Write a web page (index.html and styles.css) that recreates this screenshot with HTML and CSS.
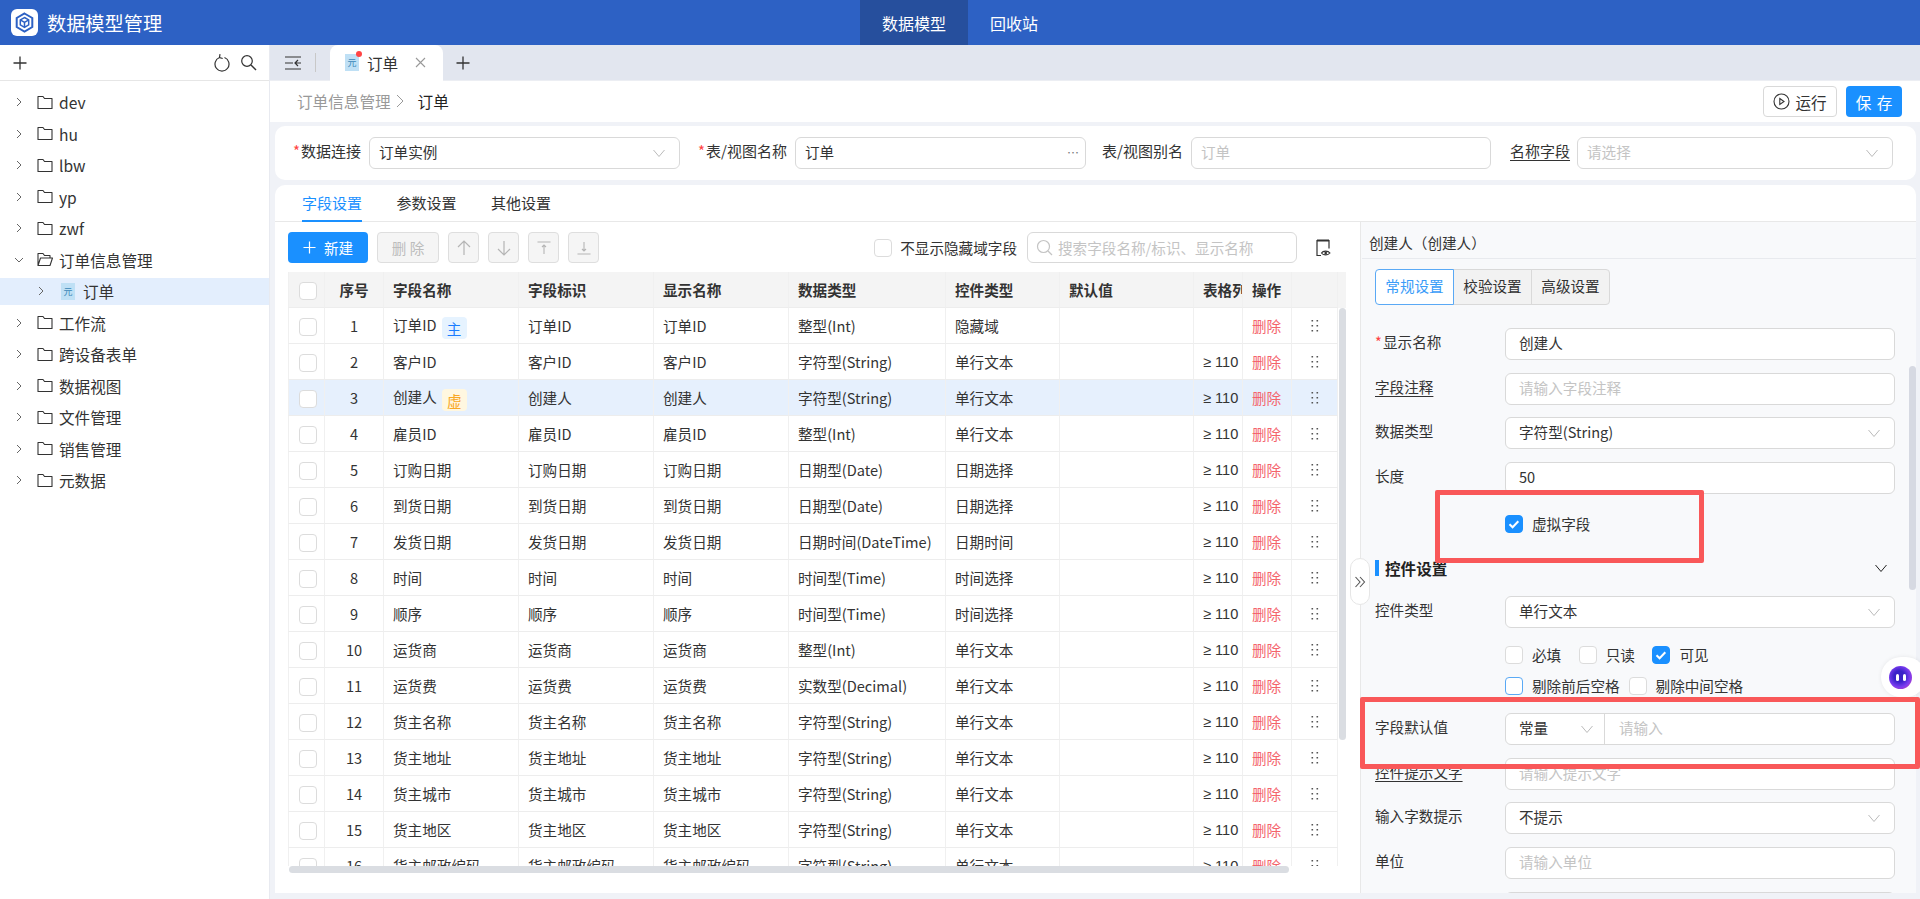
FILE: index.html
```html
<!DOCTYPE html>
<html lang="zh-CN">
<head>
    <meta charset="UTF-8">
    <title>数据模型管理</title>
    <link rel="stylesheet" href="styles.css">
</head>
<body>
    <svg class="sprite" width="0" height="0">
        <symbol id="i-folder" viewBox="0 0 16 15"><path d="M1 13.5V1.5h5l1.5 2H15v10z" fill="none" stroke="currentColor" stroke-width="1.1" stroke-linejoin="round"/></symbol>
        <symbol id="i-folder-open" viewBox="0 0 16 15"><path d="M1 13.5V1.5h5l1.5 2H13v2.5M1 13.5l2.5-7.5H15.500l-2.500 7.500z" fill="none" stroke="currentColor" stroke-width="1.1" stroke-linejoin="round"/></symbol>
        <symbol id="i-right" viewBox="0 0 10 10"><path d="M3 1l4 4-4 4" fill="none" stroke="currentColor" stroke-width="1"/></symbol>
        <symbol id="i-down" viewBox="0 0 16 16"><path d="M2.500 5l5.500 6.500L13.500 5" fill="none" stroke="currentColor" stroke-width="1"/></symbol>
        <symbol id="i-plus" viewBox="0 0 14 14"><path d="M7 0.500v13M0.500 7h13" fill="none" stroke="currentColor" stroke-width="1.300"/></symbol>
        <symbol id="i-dots" viewBox="0 0 10 14"><path d="M1.500 1h1.600v1.600H1.500zM6.500 1h1.600v1.600H6.500zM1.500 6h1.600v1.600H1.500zM6.500 6h1.600v1.600H6.500zM1.500 11h1.600v1.600H1.500zM6.500 11h1.600v1.600H6.500z" fill="#555"/></symbol>
        <symbol id="i-check" viewBox="0 0 18 18"><path d="M4.500 9.200l3.100 3.100 5.700-6" fill="none" stroke="#fff" stroke-width="2"/></symbol>
    </svg>

    <div class="app">
        <header class="topbar">
            <div class="brand">
                <span class="logo">
                    <svg width="27" height="27" viewBox="0 0 27 27"><path d="M13.500 4.500l7.800 4.500v9l-7.800 4.500L5.700 18V9z" fill="none" stroke="#2d61c4" stroke-width="2"/><path d="M13.500 8.500l4.200 2.400v5l-4.200 2.500-4.200-2.500v-5zM9.300 10.900l4.200 2.500 4.200-2.500M13.500 13.400v5" fill="none" stroke="#2d61c4" stroke-width="1.500"/></svg>
                </span>
                <span class="brand-name">数据模型管理</span>
            </div>
            <nav class="topnav">
                <a class="topnav-item active">数据模型</a>
                <a class="topnav-item">回收站</a>
            </nav>
        </header>

        <div class="layout">
            <aside class="sidebar">
                <div class="side-tools">
                    <svg class="side-add" width="14" height="14"><use href="#i-plus"/></svg>
                    <svg class="side-refresh" width="16" height="20" viewBox="0 0 16 20"><path d="M5.500 4.500a7 7 0 1 0 5 0M6 1.200L5.500 4.500l3.200 1" fill="none" stroke="#333" stroke-width="1.200"/></svg>
                    <svg class="side-search" width="17" height="17" viewBox="0 0 17 17"><circle cx="7" cy="7" r="5.300" fill="none" stroke="#333" stroke-width="1.200"/><path d="M11 11l5 5" stroke="#333" stroke-width="1.400"/></svg>
                </div>
                <ul class="tree">
                    <li class="tree-row"><svg class="tree-arrow" width="10" height="10"><use href="#i-right"/></svg><svg class="tree-folder" width="16" height="15"><use href="#i-folder"/></svg>dev</li>
                    <li class="tree-row"><svg class="tree-arrow" width="10" height="10"><use href="#i-right"/></svg><svg class="tree-folder" width="16" height="15"><use href="#i-folder"/></svg>hu</li>
                    <li class="tree-row"><svg class="tree-arrow" width="10" height="10"><use href="#i-right"/></svg><svg class="tree-folder" width="16" height="15"><use href="#i-folder"/></svg>lbw</li>
                    <li class="tree-row"><svg class="tree-arrow" width="10" height="10"><use href="#i-right"/></svg><svg class="tree-folder" width="16" height="15"><use href="#i-folder"/></svg>yp</li>
                    <li class="tree-row"><svg class="tree-arrow" width="10" height="10"><use href="#i-right"/></svg><svg class="tree-folder" width="16" height="15"><use href="#i-folder"/></svg>zwf</li>
                    <li class="tree-row"><svg class="tree-arrow open" width="10" height="10"><use href="#i-right"/></svg><svg class="tree-folder" width="16" height="15"><use href="#i-folder-open"/></svg>订单信息管理</li>
                    <li class="tree-row child"><svg class="tree-arrow" width="10" height="10"><use href="#i-right"/></svg><span class="doc-icon">元</span>订单</li>
                    <li class="tree-row"><svg class="tree-arrow" width="10" height="10"><use href="#i-right"/></svg><svg class="tree-folder" width="16" height="15"><use href="#i-folder"/></svg>工作流</li>
                    <li class="tree-row"><svg class="tree-arrow" width="10" height="10"><use href="#i-right"/></svg><svg class="tree-folder" width="16" height="15"><use href="#i-folder"/></svg>跨设备表单</li>
                    <li class="tree-row"><svg class="tree-arrow" width="10" height="10"><use href="#i-right"/></svg><svg class="tree-folder" width="16" height="15"><use href="#i-folder"/></svg>数据视图</li>
                    <li class="tree-row"><svg class="tree-arrow" width="10" height="10"><use href="#i-right"/></svg><svg class="tree-folder" width="16" height="15"><use href="#i-folder"/></svg>文件管理</li>
                    <li class="tree-row"><svg class="tree-arrow" width="10" height="10"><use href="#i-right"/></svg><svg class="tree-folder" width="16" height="15"><use href="#i-folder"/></svg>销售管理</li>
                    <li class="tree-row"><svg class="tree-arrow" width="10" height="10"><use href="#i-right"/></svg><svg class="tree-folder" width="16" height="15"><use href="#i-folder"/></svg>元数据</li>
                </ul>
            </aside>

            <main class="main">
                <div class="tabbar">
                    <svg class="tab-collapse" width="18" height="14" viewBox="0 0 18 14"><path d="M1 1h16M1 7h8M1 13h16M17 7h-6M14 4l-3 3 3 3" fill="none" stroke="#333" stroke-width="1.200"/></svg>
                    <span class="tab-sep"></span>
                    <div class="page-tab">
                        <span class="doc-icon">元<i class="dot"></i></span>
                        <span>订单</span>
                        <svg class="tab-close" width="11" height="11" viewBox="0 0 11 11"><path d="M1 1l9 9M10 1l-9 9" stroke="#999" stroke-width="1.100"/></svg>
                    </div>
                    <svg class="tab-add" width="14" height="14"><use href="#i-plus"/></svg>
                </div>

                <div class="crumbs">
                    <span class="crumb">订单信息管理</span>
                    <svg class="crumb-sep" width="10" height="14" viewBox="0 0 10 14"><path d="M2 1l6 6-6 6" fill="none" stroke="#999" stroke-width="1"/></svg>
                    <span class="crumb-now">订单</span>
                    <button class="btn-run">
                        <svg width="17" height="17" viewBox="0 0 17 17"><circle cx="8.500" cy="8.500" r="7.500" fill="none" stroke="#333" stroke-width="1.100"/><path d="M6.800 5.500l4.200 3-4.200 3z" fill="none" stroke="#333" stroke-width="1.100"/></svg>
                        运行
                    </button>
                    <button class="btn-save">保 存</button>
                </div>

                <div class="content">
                    <section class="form-card">
                        <label class="head-label lab1"><em>*</em>数据连接</label>
                        <div class="input head-input in1">订单实例<svg class="chev" width="16" height="16"><use href="#i-down"/></svg></div>
                        <label class="head-label lab2"><em>*</em>表/视图名称</label>
                        <div class="input head-input in2">订单<span class="more">⋯</span></div>
                        <label class="head-label lab3">表/视图别名</label>
                        <div class="input head-input in3 holder">订单</div>
                        <label class="head-label lab4 under">名称字段</label>
                        <div class="input head-input in4 holder">请选择<svg class="chev" width="16" height="16"><use href="#i-down"/></svg></div>
                    </section>

                    <section class="work-card">
                        <div class="subtabs">
                            <span class="subtab active">字段设置</span>
                            <span class="subtab">参数设置</span>
                            <span class="subtab">其他设置</span>
                        </div>
                        <div class="work-body">
                            <div class="fields">
                                <div class="toolbar">
                                    <button class="btn-new"><svg width="13" height="13"><use href="#i-plus"/></svg>新建</button>
                                    <button class="btn-off btn-del">删 除</button>
                                    <button class="btn-off btn-icon"><svg width="14" height="16" viewBox="0 0 14 16"><path d="M7 15V1M1 7l6-6 6 6" fill="none" stroke="#b5b5b5" stroke-width="1.200"/></svg></button>
                                    <button class="btn-off btn-icon"><svg width="14" height="16" viewBox="0 0 14 16"><path d="M7 1v14M1 9l6 6 6-6" fill="none" stroke="#b5b5b5" stroke-width="1.200"/></svg></button>
                                    <button class="btn-off btn-icon"><svg width="14" height="14" viewBox="0 0 14 14"><path d="M0.500 1h13M7 13V4M5 6l2-2 2 2" fill="none" stroke="#b5b5b5" stroke-width="1.100"/></svg></button>
                                    <button class="btn-off btn-icon"><svg width="14" height="14" viewBox="0 0 14 14"><path d="M0.500 13h13M7 1v9M5 8l2 2 2-2" fill="none" stroke="#b5b5b5" stroke-width="1.100"/></svg></button>
                                    <span class="hide-opt"><span class="box"></span>不显示隐藏域字段</span>
                                    <div class="search">
                                        <svg width="17" height="17" viewBox="0 0 17 17"><circle cx="7.500" cy="7.500" r="6" fill="none" stroke="#c4c4c4" stroke-width="1.200"/><path d="M12 12l4 4" stroke="#c4c4c4" stroke-width="1.200"/></svg>
                                        搜索字段名称/标识、显示名称
                                    </div>
                                    <svg class="eye-doc" width="20" height="20" viewBox="0 0 20 20"><path d="M8 17.500H4V2.500h12v8" fill="none" stroke="#333" stroke-width="1.200"/><path d="M4 2.500h12" stroke="#333" stroke-width="2"/><path d="M8.500 15c1.500-2.500 6.500-2.500 8.500 0-2 2.500-7 2.500-8.500 0z" fill="none" stroke="#333" stroke-width="1.100"/><circle cx="12.700" cy="15" r="1.300" fill="#333"/></svg>
                                </div>

                                <div class="table-wrap">
                                    <table class="grid">
                                        <colgroup>
                                            <col class="c-check"><col class="c-no"><col class="c-text"><col class="c-text"><col class="c-text"><col class="c-type"><col class="c-ctrl"><col class="c-def"><col class="c-w"><col class="c-w"><col class="c-drag">
                                        </colgroup>
                                        <thead>
                                            <tr><th><span class="box"></span></th><th class="mid">序号</th><th>字段名称</th><th>字段标识</th><th>显示名称</th><th>数据类型</th><th>控件类型</th><th>默认值</th><th class="clip">表格列</th><th>操作</th><th></th></tr>
                                        </thead>
                                        <tbody>
                                            <tr><td><span class="box"></span></td><td class="mid">1</td><td>订单ID<span class="tag tag-main">主</span></td><td>订单ID</td><td>订单ID</td><td>整型(Int)</td><td>隐藏域</td><td></td><td></td><td><a class="del">删除</a></td><td class="mid"><svg width="10" height="14"><use href="#i-dots"/></svg></td></tr>
                                            <tr><td><span class="box"></span></td><td class="mid">2</td><td>客户ID</td><td>客户ID</td><td>客户ID</td><td>字符型(String)</td><td>单行文本</td><td></td><td class="clip">≥ 110</td><td><a class="del">删除</a></td><td class="mid"><svg width="10" height="14"><use href="#i-dots"/></svg></td></tr>
                                            <tr class="current"><td><span class="box"></span></td><td class="mid">3</td><td>创建人<span class="tag tag-virtual">虚</span></td><td>创建人</td><td>创建人</td><td>字符型(String)</td><td>单行文本</td><td></td><td class="clip">≥ 110</td><td><a class="del">删除</a></td><td class="mid"><svg width="10" height="14"><use href="#i-dots"/></svg></td></tr>
                                            <tr><td><span class="box"></span></td><td class="mid">4</td><td>雇员ID</td><td>雇员ID</td><td>雇员ID</td><td>整型(Int)</td><td>单行文本</td><td></td><td class="clip">≥ 110</td><td><a class="del">删除</a></td><td class="mid"><svg width="10" height="14"><use href="#i-dots"/></svg></td></tr>
                                            <tr><td><span class="box"></span></td><td class="mid">5</td><td>订购日期</td><td>订购日期</td><td>订购日期</td><td>日期型(Date)</td><td>日期选择</td><td></td><td class="clip">≥ 110</td><td><a class="del">删除</a></td><td class="mid"><svg width="10" height="14"><use href="#i-dots"/></svg></td></tr>
                                            <tr><td><span class="box"></span></td><td class="mid">6</td><td>到货日期</td><td>到货日期</td><td>到货日期</td><td>日期型(Date)</td><td>日期选择</td><td></td><td class="clip">≥ 110</td><td><a class="del">删除</a></td><td class="mid"><svg width="10" height="14"><use href="#i-dots"/></svg></td></tr>
                                            <tr><td><span class="box"></span></td><td class="mid">7</td><td>发货日期</td><td>发货日期</td><td>发货日期</td><td>日期时间(DateTime)</td><td>日期时间</td><td></td><td class="clip">≥ 110</td><td><a class="del">删除</a></td><td class="mid"><svg width="10" height="14"><use href="#i-dots"/></svg></td></tr>
                                            <tr><td><span class="box"></span></td><td class="mid">8</td><td>时间</td><td>时间</td><td>时间</td><td>时间型(Time)</td><td>时间选择</td><td></td><td class="clip">≥ 110</td><td><a class="del">删除</a></td><td class="mid"><svg width="10" height="14"><use href="#i-dots"/></svg></td></tr>
                                            <tr><td><span class="box"></span></td><td class="mid">9</td><td>顺序</td><td>顺序</td><td>顺序</td><td>时间型(Time)</td><td>时间选择</td><td></td><td class="clip">≥ 110</td><td><a class="del">删除</a></td><td class="mid"><svg width="10" height="14"><use href="#i-dots"/></svg></td></tr>
                                            <tr><td><span class="box"></span></td><td class="mid">10</td><td>运货商</td><td>运货商</td><td>运货商</td><td>整型(Int)</td><td>单行文本</td><td></td><td class="clip">≥ 110</td><td><a class="del">删除</a></td><td class="mid"><svg width="10" height="14"><use href="#i-dots"/></svg></td></tr>
                                            <tr><td><span class="box"></span></td><td class="mid">11</td><td>运货费</td><td>运货费</td><td>运货费</td><td>实数型(Decimal)</td><td>单行文本</td><td></td><td class="clip">≥ 110</td><td><a class="del">删除</a></td><td class="mid"><svg width="10" height="14"><use href="#i-dots"/></svg></td></tr>
                                            <tr><td><span class="box"></span></td><td class="mid">12</td><td>货主名称</td><td>货主名称</td><td>货主名称</td><td>字符型(String)</td><td>单行文本</td><td></td><td class="clip">≥ 110</td><td><a class="del">删除</a></td><td class="mid"><svg width="10" height="14"><use href="#i-dots"/></svg></td></tr>
                                            <tr><td><span class="box"></span></td><td class="mid">13</td><td>货主地址</td><td>货主地址</td><td>货主地址</td><td>字符型(String)</td><td>单行文本</td><td></td><td class="clip">≥ 110</td><td><a class="del">删除</a></td><td class="mid"><svg width="10" height="14"><use href="#i-dots"/></svg></td></tr>
                                            <tr><td><span class="box"></span></td><td class="mid">14</td><td>货主城市</td><td>货主城市</td><td>货主城市</td><td>字符型(String)</td><td>单行文本</td><td></td><td class="clip">≥ 110</td><td><a class="del">删除</a></td><td class="mid"><svg width="10" height="14"><use href="#i-dots"/></svg></td></tr>
                                            <tr><td><span class="box"></span></td><td class="mid">15</td><td>货主地区</td><td>货主地区</td><td>货主地区</td><td>字符型(String)</td><td>单行文本</td><td></td><td class="clip">≥ 110</td><td><a class="del">删除</a></td><td class="mid"><svg width="10" height="14"><use href="#i-dots"/></svg></td></tr>
                                            <tr><td><span class="box"></span></td><td class="mid">16</td><td>货主邮政编码</td><td>货主邮政编码</td><td>货主邮政编码</td><td>字符型(String)</td><td>单行文本</td><td></td><td class="clip">≥ 110</td><td><a class="del">删除</a></td><td class="mid"><svg width="10" height="14"><use href="#i-dots"/></svg></td></tr>
                                        </tbody>
                                    </table>
                                    <span class="head-corner"></span>
                                    <span class="vbar"></span>
                                </div>
                                <div class="hbar"></div>
                            </div>

                            <div class="props">
                                <div class="props-head">创建人（创建人）</div>
                                <div class="props-body">
                                    <div class="seg">
                                        <span class="seg-item active">常规设置</span>
                                        <span class="seg-item">校验设置</span>
                                        <span class="seg-item">高级设置</span>
                                    </div>

                                    <div class="row first-row">
                                        <label class="row-label"><em>*</em>显示名称</label>
                                        <div class="input">创建人</div>
                                    </div>
                                    <div class="row">
                                        <label class="row-label under">字段注释</label>
                                        <div class="input holder">请输入字段注释</div>
                                    </div>
                                    <div class="row">
                                        <label class="row-label">数据类型</label>
                                        <div class="input">字符型(String)<svg class="chev" width="16" height="16"><use href="#i-down"/></svg></div>
                                    </div>
                                    <div class="row">
                                        <label class="row-label">长度</label>
                                        <div class="input">50</div>
                                    </div>

                                    <div class="checks virtual-check">
                                        <span class="opt"><span class="box on"><svg width="18" height="18"><use href="#i-check"/></svg></span>虚拟字段</span>
                                    </div>

                                    <div class="group-title">
                                        <span>控件设置</span>
                                        <svg width="16" height="16"><use href="#i-down"/></svg>
                                    </div>

                                    <div class="row ctrl-row">
                                        <label class="row-label">控件类型</label>
                                        <div class="input">单行文本<svg class="chev" width="16" height="16"><use href="#i-down"/></svg></div>
                                    </div>

                                    <div class="checks check-a">
                                        <span class="opt"><span class="box"></span>必填</span>
                                        <span class="opt"><span class="box"></span>只读</span>
                                        <span class="opt"><span class="box on"><svg width="18" height="18"><use href="#i-check"/></svg></span>可见</span>
                                    </div>
                                    <div class="checks check-b">
                                        <span class="opt"><span class="box focus"></span>剔除前后空格</span>
                                        <span class="opt"><span class="box"></span>剔除中间空格</span>
                                    </div>

                                    <div class="row default-row">
                                        <label class="row-label">字段默认值</label>
                                        <div class="input combo">
                                            <span class="combo-type">常量<svg class="chev" width="16" height="16"><use href="#i-down"/></svg></span>
                                            <span class="combo-value">请输入</span>
                                        </div>
                                    </div>
                                    <div class="row">
                                        <label class="row-label under">控件提示文字</label>
                                        <div class="input holder">请输入提示文字</div>
                                    </div>
                                    <div class="row">
                                        <label class="row-label">输入字数提示</label>
                                        <div class="input">不提示<svg class="chev" width="16" height="16"><use href="#i-down"/></svg></div>
                                    </div>
                                    <div class="row">
                                        <label class="row-label">单位</label>
                                        <div class="input holder">请输入单位</div>
                                    </div>
                                    <div class="row">
                                        <label class="row-label"></label>
                                        <div class="input"></div>
                                    </div>
                                </div>
                                <span class="props-bar"></span>
                            </div>
                        </div>
                    </section>
                </div>
            </main>
        </div>

        <!-- 覆盖层 -->
        <div class="split-toggle"><svg width="12" height="12" viewBox="0 0 12 12"><path d="M1.500 1l4.500 5-4.500 5M6 1l4.500 5L6 11" fill="none" stroke="#555" stroke-width="1.100"/></svg></div>
        <div class="ai-float"><span class="ai-ball"><i></i><i></i></span></div>
        <div class="mark mark-a"></div>
        <div class="mark mark-b"></div>
    </div>
</body>
</html>
```

FILE: styles.css
```css
* {
    box-sizing: border-box;
}
html, body {
    margin: 0;
    height: 100%;
    overflow: hidden;
}
body {
    font-family: "Noto Sans CJK SC", "Noto Sans", sans-serif;
    font-size: 14.6px;
    line-height: 20px;
    color: #333;
    background: #fff;
}
.sprite {
    position: absolute;
}
.app {
    position: relative;
    display: flex;
    flex-direction: column;
    height: 899px;
    overflow: hidden;
}

/* 顶部导航 */
.topbar {
    display: flex;
    height: 45px;
    flex: none;
    background-color: #2d61c4;
    color: #fff;
}
.brand {
    display: flex;
    align-items: center;
    width: 860px;
    padding-left: 11px;
}
.logo {
    display: flex;
    width: 27px;
    height: 27px;
    margin-right: 9px;
    background: #fff;
    border-radius: 6px;
}
.brand-name {
    font-size: 19.2px;
}
.topnav {
    display: flex;
}
.topnav-item {
    display: flex;
    align-items: center;
    padding: 0 22px;
    font-size: 16px;
}
.topnav-item.active {
    background-color: #264f9d;
}

.layout {
    display: flex;
    flex: 1;
    min-height: 0;
}

/* 左侧树 */
.sidebar {
    width: 270px;
    flex: none;
    border-right: 1px solid #e8eaf0;
}
.side-tools {
    display: flex;
    align-items: center;
    height: 36px;
    padding: 0 12px 0 13px;
    border-bottom: 1px solid #e6e6e6;
    color: #333;
}
.side-refresh {
    margin-left: auto;
    margin-right: 10px;
}
.tree {
    list-style: none;
    margin: 0;
    padding: 7.5px 0 0;
    font-size: 15.6px;
}
.tree-row {
    display: flex;
    align-items: center;
    height: 27px;
    margin-bottom: 4.5px;
    padding-left: 14px;
    color: #333;
}
.tree-row.child {
    padding-left: 36px;
    background-color: #e3eefd;
}
.tree-arrow {
    margin-right: 13px;
    color: #666;
}
.tree-arrow.open {
    transform: rotate(90deg);
}
.tree-folder {
    margin-right: 6px;
    color: #333;
}
.doc-icon {
    position: relative;
    display: inline-block;
    width: 14px;
    height: 17px;
    margin-right: 8px;
    background-color: #bfe0f5;
    color: #3a87b8;
    font-size: 9px;
    line-height: 18px;
    text-align: center;
}
.tree-row.child .doc-icon {
    margin-left: 2px;
}

/* 页签 */
.main {
    display: flex;
    flex-direction: column;
    flex: 1;
    min-width: 0;
}
.tabbar {
    display: flex;
    align-items: center;
    height: 36px;
    flex: none;
    padding-left: 14px;
    background-color: #e2e6ef;
    border-bottom: 1px solid #eceef3;
}
.tab-sep {
    width: 1px;
    height: 19px;
    margin: 0 14px 0 13px;
    background-color: #c8c8c8;
}
.page-tab {
    display: flex;
    align-items: center;
    width: 113px;
    height: 36px;
    padding-left: 15px;
    background: #fff;
    border-radius: 8px 8px 0 0;
    font-size: 15.6px;
}
.dot {
    position: absolute;
    top: -3px;
    right: -3px;
    width: 6px;
    height: 6px;
    background-color: #f44;
    border-radius: 50%;
}
.tab-close {
    margin-left: 17px;
}
.tab-add {
    margin-left: 13px;
    color: #333;
}

/* 面包屑 */
.crumbs {
    display: flex;
    align-items: center;
    height: 41px;
    flex: none;
    padding: 0 18px 0 27px;
    font-size: 15.6px;
}
.crumb {
    margin-bottom: 2px;
    color: #999;
}
.crumb-sep {
    margin: 0 13px 2px 4px;
}
.crumb-now {
    margin-bottom: 2px;
    color: #222;
}
.btn-run {
    display: flex;
    align-items: center;
    justify-content: center;
    gap: 5px;
    width: 74px;
    height: 31px;
    margin-left: auto;
    padding: 0;
    background: #fff;
    border: 1px solid #d9d9d9;
    border-radius: 4px;
    color: #333;
    font: inherit;
}
.btn-save {
    width: 56px;
    height: 31px;
    margin-left: 9px;
    padding: 0;
    background-color: #1a90ff;
    border: none;
    border-radius: 4px;
    color: #fff;
    font: inherit;
    word-spacing: 2px;
}

.content {
    display: flex;
    flex-direction: column;
    flex: 1;
    min-height: 0;
    padding: 4px 4px 6px 5px;
    background-color: #f0f2f7;
}

/* 通用输入 */
.input {
    position: relative;
    display: flex;
    align-items: center;
    height: 32px;
    padding: 0 13px 2px;
    background: #fff;
    border: 1px solid #d9d9d9;
    border-radius: 6px;
    color: #333;
}
.input.holder {
    color: #c4c4c4;
}
.chev {
    position: absolute;
    top: 7px;
    right: 12px;
    color: #bbb;
}
em {
    display: inline-block;
    width: 8px;
    color: #f44;
    font-style: normal;
}
.under {
    text-decoration: underline;
    text-underline-offset: 3px;
}

/* 头部表单 */
.form-card {
    display: flex;
    align-items: center;
    height: 54px;
    flex: none;
    padding-left: 18px;
    background: #fff;
    border-radius: 10px;
}
.head-label {
    flex: none;
    padding-bottom: 4px;
    font-size: 15px;
    white-space: nowrap;
}
.head-input {
    flex: none;
    padding: 0 9px 2px;
}
.lab1 { width: 68px; }
.in1 { width: 311px; margin-left: 8px; }
.lab2 { width: 89px; margin-left: 18px; }
.in2 { width: 291px; margin-left: 8px; }
.lab3 { width: 79px; margin-left: 16px; }
.in3 { width: 300px; margin-left: 10px; }
.lab4 { width: 58px; margin-left: 19px; }
.in4 { width: 316px; margin-left: 9px; }
.more {
    position: absolute;
    right: 6px;
    top: 5px;
    color: #777;
    font-size: 12px;
}

/* 主卡片 */
.work-card {
    display: flex;
    flex-direction: column;
    flex: 1;
    min-height: 0;
    margin-top: 5px;
    background: #fff;
    border-radius: 10px 10px 0 0;
}
.subtabs {
    display: flex;
    height: 37px;
    flex: none;
    gap: 34.5px;
    padding-left: 27px;
    border-bottom: 1px solid #e8e8e8;
    font-size: 15px;
}
.subtab {
    height: 37px;
    padding-top: 8px;
    color: #333;
}
.subtab.active {
    color: #1a90ff;
    border-bottom: 2px solid #1a90ff;
}
.work-body {
    display: flex;
    flex: 1;
    min-height: 0;
}
.fields {
    width: 1085px;
    flex: none;
    padding: 10px 0 0 13px;
}
.toolbar {
    display: flex;
    align-items: center;
    width: 1058px;
    height: 31px;
    gap: 9px;
}
.toolbar button {
    height: 31px;
    padding: 0;
    border-radius: 4px;
    font: inherit;
}
.btn-new {
    display: flex;
    align-items: center;
    justify-content: center;
    gap: 8px;
    width: 80px;
    background-color: #1a90ff;
    border: none;
    color: #fff;
}
.btn-off {
    background-color: #f5f5f5;
    border: 1px solid #dedede;
    color: #bcbcbc;
}
.btn-del {
    width: 62px;
}
.btn-icon {
    display: flex;
    align-items: center;
    justify-content: center;
    width: 31px;
}
.box {
    display: inline-block;
    width: 18px;
    height: 18px;
    flex: none;
    background: #fff;
    border: 1px solid #dcdcdc;
    border-radius: 4px;
    vertical-align: middle;
}
.box svg {
    display: block;
    margin: -1px;
}
.box.on {
    background-color: #1a90ff;
    border-color: #1a90ff;
}
.box.focus {
    border-color: #5aa9f5;
}
.hide-opt {
    display: flex;
    align-items: center;
    gap: 8px;
    margin-left: auto;
    margin-right: 1px;
}
.search {
    display: flex;
    align-items: center;
    gap: 5px;
    width: 270px;
    height: 31px;
    padding-left: 8px;
    border: 1px solid #d9d9d9;
    border-radius: 6px;
    color: #c4c4c4;
}
.eye-doc {
    margin: 0 13px 0 7px;
}

/* 表格 */
.table-wrap {
    position: relative;
    width: 1058px;
    height: 594px;
    margin-top: 9px;
    overflow: hidden;
}
.grid {
    width: 1050px;
    border-collapse: separate;
    border-spacing: 0;
    table-layout: fixed;
}
.c-check { width: 37px; }
.c-no { width: 59px; }
.c-text { width: 135px; }
.c-type { width: 157px; }
.c-ctrl { width: 114px; }
.c-def { width: 134px; }
.c-w { width: 49px; }
.c-drag { width: 46px; }
.grid th,
.grid td {
    height: 36px;
    padding: 0 0 0 9px;
    border-right: 1px solid #f0f0f0;
    border-bottom: 1px solid #ededed;
    text-align: left;
    white-space: nowrap;
    overflow: hidden;
}
.grid th {
    background-color: #f4f4f4;
    color: #333;
    font-weight: 700;
}
.grid th:first-child,
.grid td:first-child {
    padding-left: 10px;
    border-left: 1px solid #f0f0f0;
}
.grid .mid {
    padding-left: 0;
    text-align: center;
}
.grid .clip {
    padding-left: 9px;
}
.grid td.clip {
    font-family: "Liberation Sans", sans-serif;
}
.grid td svg {
    display: inline-block;
    vertical-align: middle;
    margin-top: -4px;
}
.grid tr.current td {
    background-color: #e6f0fd;
}
.del {
    color: #f4646c;
}
.tag {
    display: inline-block;
    width: 25px;
    height: 22px;
    margin: -1px 0 -3px 5px;
    border-radius: 4px;
    line-height: 24px;
    text-align: center;
    vertical-align: middle;
}
.tag-main {
    background-color: #e6f3ff;
    color: #1a7dff;
}
.tag-virtual {
    background-color: #fff7e0;
    color: #f9a825;
}
.head-corner {
    position: absolute;
    top: 0;
    right: 0;
    width: 8px;
    height: 36px;
    background-color: #f4f4f4;
}
.vbar {
    position: absolute;
    top: 36px;
    right: 0;
    width: 7px;
    height: 432px;
    background-color: #dadde2;
    border-radius: 4px;
}
.hbar {
    width: 1000px;
    height: 7px;
    margin-left: 1px;
    background-color: #dadde2;
    border-radius: 4px;
}

/* 右侧属性 */
.props {
    position: relative;
    flex: 1;
    min-width: 0;
    overflow: hidden;
    background-color: #f8f9fb;
    border-left: 1px solid #e8e8e8;
}
.props-head {
    height: 37px;
    margin-left: 1px;
    padding: 11px 0 0 7px;
    border-bottom: 1px solid #e8eaee;
}
.props-body {
    padding: 10px 21px 0 14px;
}
.seg {
    display: flex;
    height: 36px;
}
.seg-item {
    display: flex;
    align-items: center;
    justify-content: center;
    width: 79px;
    margin-right: -1px;
    padding-bottom: 2px;
    background-color: #f2f2f2;
    border: 1px solid #d9d9d9;
    color: #333;
}
.seg-item:first-child {
    border-radius: 4px 0 0 4px;
}
.seg-item:last-child {
    border-radius: 0 4px 4px 0;
}
.seg-item.active {
    position: relative;
    background: #fff;
    border-color: #5aa9f5;
    color: #3a9cf8;
}
.row {
    display: flex;
    align-items: center;
    height: 32px;
    margin-top: 12.7px;
}
.first-row {
    margin-top: 23px;
}
.row-label {
    width: 130px;
    flex: none;
    padding-bottom: 4px;
}
.row .input {
    flex: 1;
}
.checks {
    display: flex;
    margin-left: 130px;
    height: 18px;
    gap: 17.5px;
}
.opt {
    display: flex;
    align-items: center;
    gap: 9px;
    white-space: nowrap;
}
.virtual-check {
    margin-top: 21px;
}
.group-title {
    display: flex;
    align-items: center;
    justify-content: space-between;
    height: 16px;
    margin-top: 27px;
    padding-right: 6px;
    border-left: 4px solid #1a90ff;
    color: #222;
}
.group-title span {
    padding-left: 6px;
    font-size: 15.6px;
    font-weight: 700;
}
.ctrl-row {
    margin-top: 20px;
}
.check-a {
    margin-top: 18px;
}
.check-b {
    margin-top: 13px;
    gap: 9px;
}
.default-row {
    margin-top: 18px;
}
.combo {
    padding: 0;
}
.combo-type {
    position: relative;
    display: flex;
    align-items: center;
    width: 99px;
    height: 30px;
    padding: 0 0 2px 13px;
    border-right: 1px solid #d9d9d9;
}
.combo-type .chev {
    top: 7px;
    right: 9px;
}
.combo-value {
    padding: 0 0 2px 14px;
    color: #c4c4c4;
}
.props-bar {
    position: absolute;
    top: 144px;
    right: 0;
    width: 7px;
    height: 224px;
    background-color: #d6d9e2;
    border-radius: 4px;
}

/* 覆盖层 */
.split-toggle {
    position: absolute;
    left: 1350px;
    top: 558px;
    display: flex;
    align-items: center;
    justify-content: center;
    width: 20px;
    height: 47px;
    background: #fff;
    border: 1px solid #e6e6e6;
    border-radius: 10px;
}
.ai-float {
    position: absolute;
    left: 1881px;
    top: 657px;
    display: flex;
    align-items: center;
    width: 45px;
    height: 40px;
    padding-left: 8px;
    background: #fff;
    border-radius: 20px;
    box-shadow: 0 0 4px rgba(0, 0, 0, 0.08);
}
.ai-ball {
    display: flex;
    align-items: center;
    justify-content: center;
    gap: 4px;
    width: 23px;
    height: 23px;
    background: radial-gradient(circle at 45% 45%, #3a22c8 30%, #7a3cf0 60%, #ee3f9e 100%);
    border-radius: 50%;
}
.ai-ball i {
    width: 3px;
    height: 7px;
    background: #fff;
    border-radius: 2px;
}
.mark {
    position: absolute;
    border: 5px solid #f95859;
    border-radius: 2px;
}
.mark-a {
    left: 1435px;
    top: 490px;
    width: 269px;
    height: 73px;
}
.mark-b {
    left: 1360px;
    top: 697px;
    width: 560px;
    height: 72px;
}
```
